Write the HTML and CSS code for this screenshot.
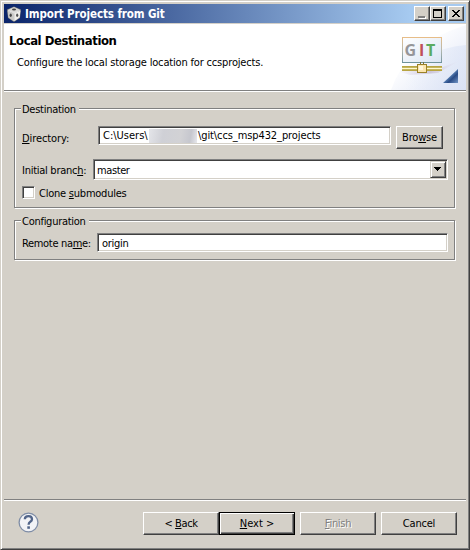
FILE: index.html
```
<!DOCTYPE html>
<html lang="en">
<head>
<meta charset="utf-8">
<title>Import Projects from Git</title>
<link rel="stylesheet" href="styles.css">
</head>
<body>
<main class="window">
  <header class="titlebar">
    <svg class="app-icon" width="16" height="16" viewBox="0 0 16 16">
      <path d="M8 0.5 15 3.5 14 12 8 16 2 12 1 3.5Z" fill="#777"/>
      <path d="M8 1 14.5 4 8 7 1.5 4Z" fill="#d8d8d5"/>
      <path d="M1.5 4.5 7.7 7.3 7.7 15.2 2.3 11.6Z" fill="#c9c9c6"/>
      <path d="M14.5 4.5 8.3 7.3 8.3 15.2 13.7 11.6Z" fill="#efefeb"/>
      <ellipse cx="8" cy="3.5" rx="2" ry=".9" fill="#444"/>
      <ellipse cx="4.7" cy="9.2" rx="1.1" ry="1.7" fill="#444"/>
      <ellipse cx="11.2" cy="9.2" rx="1.1" ry="1.7" fill="#555"/>
      <path d="M8 7V15M2 4.5 8 7 14 4.5" stroke="#fff" stroke-width=".7" fill="none"/>
    </svg>
    <h1 class="title">Import Projects from Git</h1>
    <div class="controls">
      <span class="control"><svg width="12" height="11" shape-rendering="crispEdges"><path d="M3 10H10" stroke="#fff" stroke-width="2"/><path d="M2 9H9" stroke="#808080" stroke-width="2"/></svg></span>
      <span class="control"><svg width="12" height="11" shape-rendering="crispEdges"><path d="M1 1H10V10H1ZM2 3V9H9V3Z" fill="#000" fill-rule="evenodd"/></svg></span>
      <span class="control close"><svg width="12" height="11" shape-rendering="crispEdges"><path d="M1 1H3V2H4V3H6V2H7V1H9V2H8V3H7V4H6V5H7V6H8V7H9V8H7V7H6V6H4V7H3V8H1V7H2V6H3V5H4V4H3V3H2V2H1Z" transform="translate(1 1)" fill="#000"/></svg></span>
    </div>
  </header>
  <section class="banner">
    <div class="banner-text">
      <h2 class="heading">Local Destination</h2>
      <p class="description">Configure the local storage location for ccsprojects.</p>
    </div>
    <svg class="banner-art" width="75" height="66" viewBox="391 24 75 66">
      <defs>
        <linearGradient id="sweep" x1="0" y1="0" x2="1" y2="1"><stop offset=".35" stop-color="#fff"/><stop offset="1" stop-color="#dce3f5"/></linearGradient>
        <linearGradient id="fade" x1="0" y1="0" x2="1" y2="0"><stop offset=".2" stop-color="#d9e2f5" stop-opacity="0"/><stop offset="1" stop-color="#d9e2f5"/></linearGradient>
        <linearGradient id="panel" x1="0" y1="0" x2="1" y2="1"><stop offset="0" stop-color="#fff"/><stop offset="1" stop-color="#dae5f4"/></linearGradient>
        <linearGradient id="rim" x1="0" y1="0" x2="0" y2="1"><stop offset="0" stop-color="#e7bd88"/><stop offset=".5" stop-color="#b5b8ae"/><stop offset="1" stop-color="#7394a0"/></linearGradient>
        <linearGradient id="corner" x1="0" y1="0" x2="1" y2="1"><stop offset=".35" stop-color="#7aa6d5"/><stop offset=".65" stop-color="#284a85"/><stop offset="1" stop-color="#7295c5"/></linearGradient>
        <linearGradient id="shade" x1="0" y1="0" x2="1" y2="0"><stop offset="0" stop-color="#e6dfed" stop-opacity=".2"/><stop offset=".5" stop-color="#ccc5d9"/><stop offset="1" stop-color="#e5e6f4" stop-opacity=".1"/></linearGradient>
      </defs>
      <path d="M391 90Q407 43 466 25V90Z" fill="url(#sweep)"/>
      <path d="M391 90Q425 47 466 45V90Z" fill="url(#fade)" opacity=".6"/>
      <path d="M400 72 409 67H443L461 60 438 73 410 75Z" fill="url(#shade)"/>
      <rect x="402.5" y="37.5" width="39" height="25" fill="url(#panel)"/>
      <path d="M402 37.5H442" stroke="#e7bd88"/>
      <rect x="402" y="37" width="1" height="26" fill="url(#rim)"/><rect x="441" y="37" width="1" height="26" fill="url(#rim)"/>
      <path d="M402 62.5H442" stroke="#6f939a"/>
      <text class="git" y="56.3"><tspan x="404.5" fill="#969699">G</tspan><tspan x="419" fill="#bf5058">I</tspan><tspan x="426" fill="#5bab60">T</tspan></text>
      <path d="M402 66.5H442M402 70.5H442" stroke="#b8a542"/>
      <path d="M402 67.5H442M402 69.5H442" stroke="#c5b65e"/><path d="M402 68.5H442" stroke="#fff8cf"/>
      <path d="M420.5 62V64M423.5 62V64" stroke="#7a713a"/>
      <rect x="417.5" y="64.5" width="9" height="8" fill="#fbe5ad" stroke="#9a8127"/>
      <rect x="419" y="66" width="4" height="4" fill="#fff6dc"/>
      <path d="M458 69V83H443Z" fill="url(#corner)"/>
    </svg>
  </section>
  <section class="content">
    <fieldset class="group destination">
      <legend class="t-dest">Destination</legend>
      <div class="row directory">
        <span class="label t-dir"><u>D</u>irectory:</span>
        <div class="field path"><span class="t-users">C:\Users\</span><i class="redacted"></i><span class="t-git">\git\ccs_msp432_projects</span></div>
        <button class="button browse"><span class="t-browse">Bro<u>w</u>se</span></button>
      </div>
      <div class="row branch">
        <span class="label t-initial">Initial branc<u>h</u>:</span>
        <div class="field combo"><span class="t-master">master</span><span class="arrow"><svg width="7" height="4" shape-rendering="crispEdges"><path d="M0 0H7V1H6V2H5V3H4V4H3V3H2V2H1V1H0Z"/></svg></span></div>
      </div>
      <div class="row check"><i class="checkbox"></i><span class="t-clone">Clone <u>s</u>ubmodules</span></div>
    </fieldset>
    <fieldset class="group configuration">
      <legend class="t-config">Configuration</legend>
      <div class="row remote">
        <span class="label t-remote">Remote na<u>m</u>e:</span>
        <div class="field name"><span class="t-origin">origin</span></div>
      </div>
    </fieldset>
  </section>
  <footer class="footer">
    <svg class="help" width="21" height="21" viewBox="0 0 21 21">
      <circle cx="10.5" cy="10.5" r="9.4" fill="#f2f3f6" stroke="#7f8da6" stroke-width="1.3"/>
      <path d="M6.8 7.3Q7 4.2 10.5 4.2T14 7.3Q14 8.7 12.3 9.8T10.6 12.7" fill="none" stroke="#526589" stroke-width="2.3"/>
      <rect x="9.3" y="14.3" width="2.6" height="2.5" fill="#526589"/>
    </svg>
    <button class="button back"><span class="t-back">&lt; <u>B</u>ack</span></button>
    <button class="button next"><span class="t-next"><u>N</u>ext &gt;</span></button>
    <button class="button finish" disabled><span class="t-finish"><u>F</u>inish</span></button>
    <button class="button cancel"><span class="t-cancel">Cancel</span></button>
  </footer>
</main>
</body>
</html>
```
FILE: styles.css
```
* { box-sizing: border-box; }
body { margin: 0; font: 11px/13px "DejaVu Sans Condensed", "DejaVu Sans", sans-serif; font-stretch: condensed; color: #000; }
.window { width: 470px; height: 550px; background: #d4d0c8; border: 1px solid #d4d0c8; border-right-color: #404040; border-bottom-color: #404040; box-shadow: inset 1px 1px #fff, inset -1px -1px #808080; padding: 3px; display: flex; flex-direction: column; white-space: nowrap; }
h1, h2, p { margin: 0; }
u { text-decoration: underline; text-decoration-thickness: 1px; text-underline-offset: 1px; text-decoration-skip-ink: none; }
.titlebar { width: 462px; height: 19px; display: flex; align-items: center; padding: 0 2px; background: linear-gradient(90deg, #0a246a, #a6caf0 88%); }
.title { color: #fff; font-size: 11.5px; line-height: 13px; margin: 1px 0 0 3px; letter-spacing: -.1px; }
.controls { display: flex; margin-left: auto; }
.control { width: 16px; height: 15px; background: #d4d0c8; border: 1px solid; border-color: #fff #404040 #404040 #fff; box-shadow: inset -1px -1px #808080; padding: 1px; }
.control svg { display: block; }
.close { margin-left: 2px; }
.banner { width: 462px; height: 69px; border-top: 1px solid #d4d0c8; border-bottom: 1px solid #fff; box-shadow: inset 0 -1px #808080; background: #fff; display: flex; justify-content: space-between; padding-bottom: 1px; }
.banner-text { padding: 9px 0 0 5px; }
.heading { font-size: 13px; line-height: 15px; letter-spacing: -.43px; }
.description { margin: 8px 0 0 8px; letter-spacing: -.17px; }
.git { font: bold 16px "Open Sans", sans-serif; }
.content { padding: 10px 10px 0; height: 407px; }
.group { position: relative; border: 1px solid #808080; box-shadow: 1px 1px #fff, inset 1px 1px #fff; margin: 0; padding: 0 6px; width: 441px; }
.group legend { padding: 1px 3px 0 1px; margin-left: 0; height: 13px; background: #d4d0c8; letter-spacing: -.27px; }
.destination { height: 106px; }
.configuration { height: 46px; margin-top: 6px; }
.row { display: flex; align-items: flex-start; padding-left: 1px; }
.field { background: #fff; border: 1px solid; border-color: #808080 #fff #fff #808080; box-shadow: inset 1px 1px #404040, inset -1px -1px #d4d0c8; display: flex; }
.button { font: inherit; color: #000; background: #d4d0c8; border: 1px solid; border-color: #fff #404040 #404040 #fff; box-shadow: inset -1px -1px #808080; height: 23px; width: 76px; padding: 0; border-radius: 0; display: flex; align-items: center; justify-content: center; }
.directory { padding-top: 11px; height: 44px; }
.directory .label { width: 76px; padding-top: 6px; letter-spacing: -.1px; }
.path { width: 293px; height: 19px; padding: 2px 0 0 4px; }
.t-users { width: 46px; }
.redacted { width: 48px; height: 14px; background: linear-gradient(100deg, #e4e5e9, #cfd0d6 30%, #d2d2d5 65%, #c6c7ce 85%, #e7e7ec); }
.t-git { margin-left: 1px; letter-spacing: -.1px; }
.browse { width: 47px; margin-left: 5px; letter-spacing: -.2px; }
.branch { height: 27px; }
.branch .label { width: 71px; padding-top: 5px; letter-spacing: -.27px; }
.combo { width: 355px; height: 21px; padding: 4px 1px 1px 3px; letter-spacing: -.4px; }
.arrow { margin: -3px 0 0 auto; width: 16px; height: 17px; background: #d4d0c8; border: 1px solid; border-color: #d4d0c8 #404040 #404040 #d4d0c8; box-shadow: inset 1px 1px #fff, inset -1px -1px #808080; padding: 5px 0 0 3px; }
.arrow svg { display: block; }
.check span { margin: 1px 0 0 4px; letter-spacing: -.23px; }
.checkbox { width: 13px; height: 13px; background: #fff; border: 1px solid; border-color: #808080 #fff #fff #808080; box-shadow: inset 1px 1px #404040, inset -1px -1px #d4d0c8; }
.remote { padding-top: 6px; }
.remote .label { width: 75px; padding-top: 4px; letter-spacing: -.33px; }
.name { width: 351px; height: 19px; padding: 3px 0 0 4px; letter-spacing: -.3px; }
.footer { height: 47px; width: 462px; border-top: 1px solid #808080; box-shadow: inset 0 1px #fff; display: flex; padding: 12px 9px 0 14px; }
.help { margin-right: 104px; }
.back { letter-spacing: -.4px; }
.next { border: 1px solid #000; box-shadow: inset 1px 1px #fff, inset -1px -1px #404040, inset -2px -2px #808080; }
.finish { color: #808080; text-shadow: 1px 1px #fff; margin-left: 5px; letter-spacing: -.3px; }
.cancel { margin-left: 5px; letter-spacing: -.2px; }
```
